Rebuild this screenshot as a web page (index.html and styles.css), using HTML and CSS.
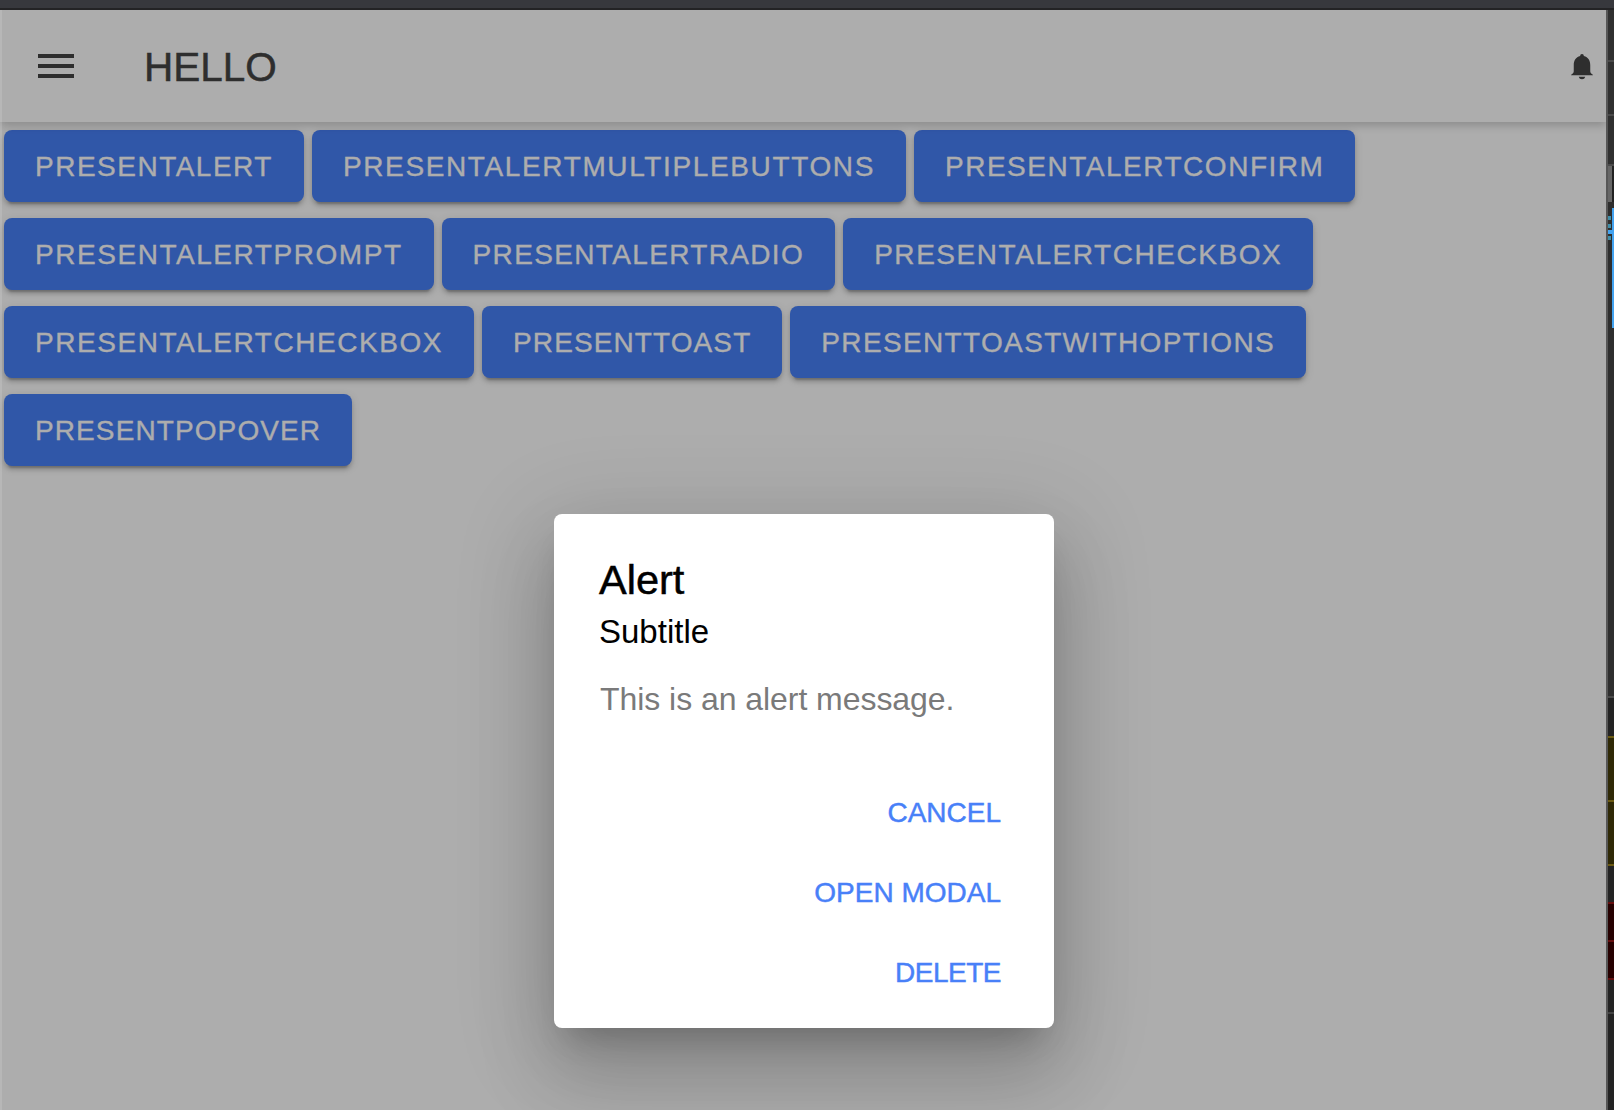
FILE: index.html
```html
<!DOCTYPE html>
<html lang="en">
<head>
    <meta charset="UTF-8">
    <meta name="viewport" content="width=device-width, initial-scale=1.0">
    <title>Hello</title>
    <link rel="stylesheet" href="styles.css">
</head>
<body>
    <div class="topbar"></div>
    <div class="workspace">
        <main class="app">
            <header class="toolbar">
                <svg class="menu-icon" width="36" height="24" viewBox="0 0 36 24" aria-hidden="true">
                    <path d="M0 0h36v4H0zM0 10h36v4H0zM0 20h36v4H0z" fill="#444"/>
                </svg>
                <h1 class="toolbar-title">HELLO</h1>
                <svg class="bell-icon" width="22" height="26" viewBox="0 0 24 28" preserveAspectRatio="none" aria-hidden="true">
                    <path d="M12 0c1.300 0 2 .8 2 2.200C18.800 3.300 21 7.200 21 12v6.500c0 1.600.9 2.500 2.300 3.300L24 23H0l.7-1.200C2.100 21 3 20.100 3 18.500V12c0-4.800 2.200-8.700 7-9.800C10 .8 10.700 0 12 0zM8.500 24.500h7c-.4 1.800-1.800 2.700-3.500 2.700s-3.100-.9-3.500-2.700z" fill="#444"/>
                </svg>
            </header>

            <section class="button-list">
                <button class="action-btn track-14">PRESENTALERT</button>
                <button class="action-btn track-17">PRESENTALERTMULTIPLEBUTTONS</button>
                <button class="action-btn track-16">PRESENTALERTCONFIRM</button>
                <button class="action-btn track-15">PRESENTALERTPROMPT</button>
                <button class="action-btn track-13">PRESENTALERTRADIO</button>
                <button class="action-btn track-15">PRESENTALERTCHECKBOX</button>
                <button class="action-btn track-15">PRESENTALERTCHECKBOX</button>
                <button class="action-btn track-11">PRESENTTOAST</button>
                <button class="action-btn track-13">PRESENTTOASTWITHOPTIONS</button>
                <button class="action-btn track-11">PRESENTPOPOVER</button>
            </section>

            <!-- alert on top of the dimmed page -->
            <div class="backdrop">
                <div class="alert">
                    <h2 class="alert-title">Alert</h2>
                    <h3 class="alert-subtitle">Subtitle</h3>
                    <p class="alert-message">This is an alert message.</p>
                    <div class="alert-actions">
                        <button class="alert-btn">CANCEL</button>
                        <button class="alert-btn">OPEN MODAL</button>
                        <button class="alert-btn btn-delete">DELETE</button>
                    </div>
                </div>
            </div>
        </main>

        <!-- editor minimap strip -->
        <aside class="side-strip">
            <div class="strip-seg seg-52"></div>
            <div class="strip-seg seg-54"></div>
            <div class="strip-seg seg-50"></div>
            <div class="strip-thumb"></div>
            <div class="strip-seg seg-492"></div>
            <div class="strip-seg seg-40"></div>
            <div class="strip-warn"></div>
            <div class="strip-warn"></div>
            <div class="strip-gap"></div>
            <div class="strip-error"></div>
            <div class="strip-error"></div>
            <div class="strip-seg seg-36"></div>
            <div class="strip-seg seg-rest"></div>
            <div class="strip-blue"></div>
            <div class="strip-mark mark-1"></div>
            <div class="strip-mark mark-2"></div>
            <div class="strip-mark mark-3"></div>
            <div class="strip-mark mark-4"></div>
        </aside>
    </div>
</body>
</html>
```

FILE: styles.css
```css
html, body {
    margin: 0;
    padding: 0;
    height: 100%;
    overflow: hidden;
}

body {
    font-family: "Liberation Sans", Arial, sans-serif;
    display: flex;
    flex-direction: column;
    background-color: #fff;
}

.topbar {
    height: 8px;
    flex: none;
    background-color: #37383d;
    border-bottom: 2px solid #232325;
}

.workspace {
    flex: 1;
    display: flex;
    min-height: 0;
}

.app {
    flex: 1;
    position: relative;
    background-color: #fff;
    overflow: hidden;
}

/* header */
.toolbar {
    height: 112px;
    box-sizing: border-box;
    display: flex;
    align-items: center;
    padding: 3px 13px 0 38px;
    background-color: #fff;
    box-shadow: 0 4px 8px rgba(0, 0, 0, 0.18);
    position: relative;
}

.menu-icon {
    flex: none;
    margin-top: -3px;
}

.toolbar-title {
    flex: 1;
    margin: 0 0 0 70px;
    font-size: 40.5px;
    font-weight: 400;
    color: #444;
    -webkit-text-stroke: 0.5px #444;
}

.bell-icon {
    flex: none;
    margin-top: -2px;
}

/* buttons */
.button-list {
    display: flex;
    flex-wrap: wrap;
    align-content: flex-start;
}

.action-btn {
    height: 72px;
    margin: 8px 4px;
    padding: 2px 31px 0;
    border: none;
    border-radius: 8px;
    background-color: #4880f8;
    color: #fff;
    font-family: inherit;
    font-size: 28px;
    -webkit-text-stroke: 0.3px #fff;
    box-shadow: 0 6px 2px -4px rgba(0, 0, 0, 0.2), 0 4px 4px rgba(0, 0, 0, 0.14), 0 2px 10px rgba(0, 0, 0, 0.12);
}

/* tracking differs a little per label, Helvetica vs Liberation widths */
.track-11 { letter-spacing: 1.1px; }
.track-13 { letter-spacing: 1.35px; }
.track-14 { letter-spacing: 1.5px; }
.track-15 { letter-spacing: 1.55px; }
.track-16 { letter-spacing: 1.52px; }
.track-17 { letter-spacing: 1.63px; }

/* alert */
.backdrop {
    position: absolute;
    inset: 0;
    display: flex;
    justify-content: center;
    align-items: flex-start;
    padding: 504px 0 0 0;
    background-color: rgba(0, 0, 0, 0.32);
    border-left: 2px solid rgba(255, 255, 255, 0.12);
}

.alert {
    width: 500px;
    height: 514px;
    flex: none;
    display: flex;
    flex-direction: column;
    border-radius: 8px;
    background-color: #fff;
    box-shadow: 0 22px 30px -14px rgba(0, 0, 0, 0.2), 0 48px 76px 6px rgba(0, 0, 0, 0.14), 0 18px 92px 16px rgba(0, 0, 0, 0.12);
}

.alert-title {
    margin: 43px 45px 0;
    font-size: 41.5px;
    line-height: 46px;
    font-weight: 400;
    color: #000;
    -webkit-text-stroke: 0.5px #000;
}

.alert-subtitle {
    margin: 10px 45px 0;
    font-size: 33px;
    line-height: 38px;
    font-weight: 400;
    color: #000;
}

.alert-message {
    margin: 29px 46px 0;
    font-size: 32px;
    line-height: 38px;
    letter-spacing: -0.05px;
    color: #7a7a7a;
}

.alert-actions {
    margin-top: 75px;
    padding-right: 53px;
    display: flex;
    flex-direction: column;
    align-items: flex-end;
    gap: 40px;
}

.alert-btn {
    height: 40px;
    padding: 0;
    border: none;
    background: none;
    color: #4880f8;
    font-family: inherit;
    font-size: 28px;
    -webkit-text-stroke: 0.45px #4880f8;
}

.btn-delete {
    letter-spacing: -0.5px;
}

/* side strip */
.side-strip {
    width: 6px;
    flex: none;
    position: relative;
    display: flex;
    flex-direction: column;
    background-color: #242424;
    border-left: 2px solid #565656;
}

.strip-seg {
    flex: none;
    background-color: #303030;
    border-bottom: 2px solid #4a4a4a;
}

.seg-52 { height: 50px; }
.seg-54 { height: 52px; }
.seg-50 { height: 48px; }
.seg-492 { height: 494px; background-color: #2e2e2e; }
.seg-40 { height: 38px; background-color: #232323; border-bottom: none; }
.seg-36 { height: 32px; background-color: #232323; border-top: 2px solid #650e0e; border-bottom-color: #444; }
.seg-rest { flex: 1; background-color: #232323; border-bottom: none; }

.strip-thumb {
    height: 36px;
    flex: none;
    background-color: #666;
    border-right: 2px solid #222;
}

.strip-warn {
    height: 62px;
    flex: none;
    background-color: #2f2906;
    border-top: 2px solid #6b5a12;
}

.strip-warn + .strip-gap {
    height: 36px;
    flex: none;
    background-color: #232323;
    border-top: 2px solid #6b5a12;
}

.strip-error {
    height: 36px;
    flex: none;
    background-color: #260000;
    border-top: 2px solid #650e0e;
}

.strip-blue {
    position: absolute;
    top: 198px;
    right: 0;
    width: 2px;
    height: 120px;
    background-color: #43a3f0;
}

.strip-mark {
    position: absolute;
    left: 0;
    width: 3px;
    height: 4px;
    background-color: #3f8ea8;
}

.mark-1 { top: 206px; }
.mark-2 { top: 214px; }
.mark-3 { top: 220px; width: 6px; background-color: #43a3f0; }
.mark-4 { top: 226px; }
```
